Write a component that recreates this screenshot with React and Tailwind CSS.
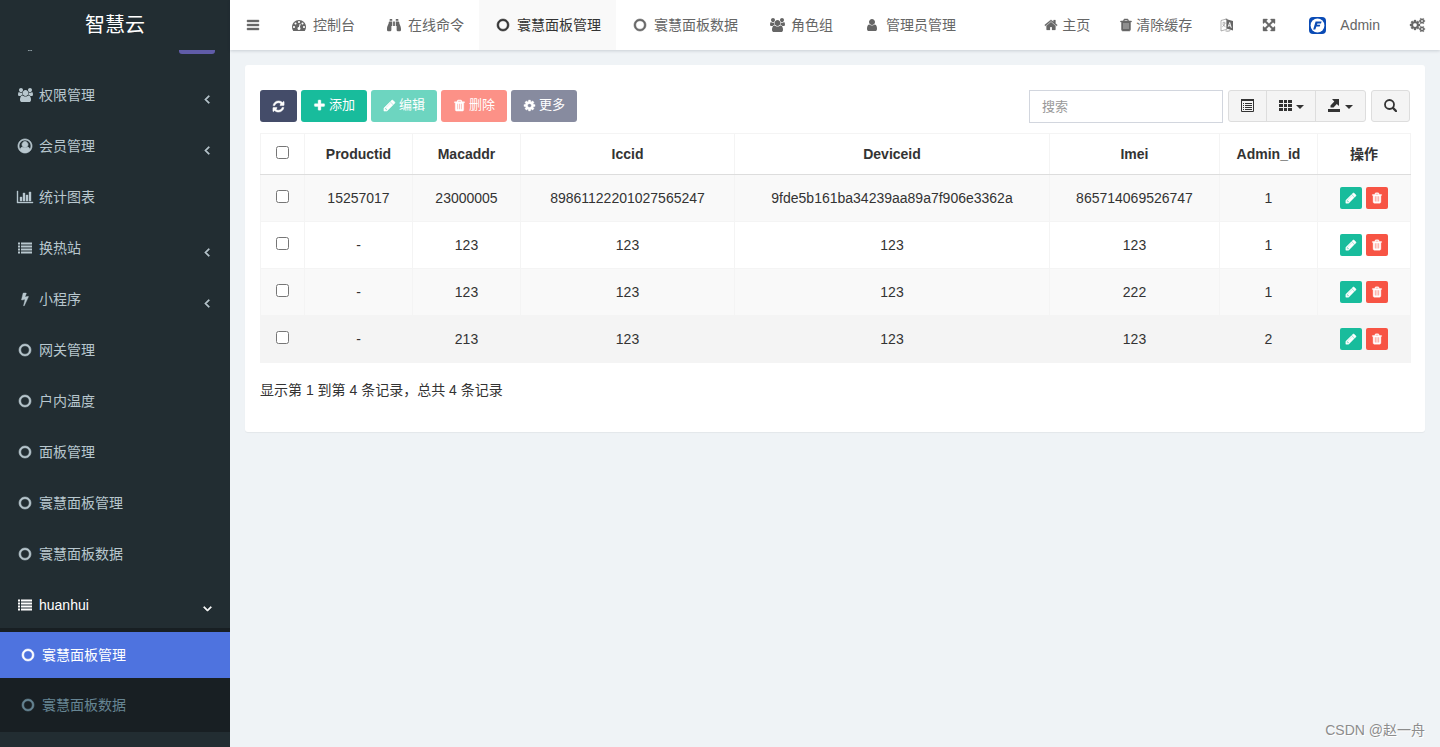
import { FaBinoculars } from "react-icons/fa";

const GLYPHS = {
  bars: { weight: 50, d: "M1664 1344v128q0 26-19 45t-45 19h-1408q-26 0-45-19t-19-45v-128q0-26 19-45t45-19h1408q26 0 45 19t19 45zm0-512v128q0 26-19 45t-45 19h-1408q-26 0-45-19t-19-45v-128q0-26 19-45t45-19h1408q26 0 45 19t19 45zm0-512v128q0 26-19 45t-45 19h-1408q-26 0-45-19t-19-45v-128q0-26 19-45t45-19h1408q26 0 45 19t19 45z" },
  circle: { weight: 70, d: "M896 352q-148 0-273 73t-198 198-73 273 73 273 198 198 273 73 273-73 198-198 73-273-73-273-198-198-273-73zm768 544q0 209-103 385.5t-279.5 279.5-385.5 103-385.5-103-279.5-279.5-103-385.5 103-385.5 279.5-279.5 385.5-103 385.5 103 279.5 279.5 103 385.5z" },
  user: { d: "M1536 1399q0 109-62.5 187t-150.5 78h-854q-88 0-150.5-78t-62.5-187q0-85 8.5-160.5t31.5-152 58.5-131 94-89 134.5-34.5q131 128 313 128t313-128q76 0 134.5 34.5t94 89 58.5 131 31.5 152 8.5 160.5zm-256-887q0 159-112.5 271.5t-271.5 112.5-271.5-112.5-112.5-271.5 112.5-271.5 271.5-112.5 271.5 112.5 112.5 271.5z" },
  users: { box: "-64 0 1920 1792", d: "M529 896q-162 5-265 128h-134q-82 0-138-40.5t-56-118.5q0-353 124-353 6 0 43.5 21t97.5 42.5 119 21.5q67 0 133-23-5 37-5 66 0 139 81 256zm1071 637q0 120-73 189.5t-194 69.5h-874q-121 0-194-69.5t-73-189.5q0-53 3.5-103.5t14-109 26.5-108.5 43-97.5 62-81 85.5-53.5 111.5-20q10 0 43 21.5t73 48 107 48 135 21.5 135-21.5 107-48 73-48 43-21.5q61 0 111.5 20t85.5 53.5 62 81 43 97.5 26.5 108.5 14 109 3.5 103.5zm-1024-1277q0 106-75 181t-181 75-181-75-75-181 75-181 181-75 181 75 75 181zm704 384q0 159-112.5 271.5t-271.5 112.5-271.5-112.5-112.5-271.5 112.5-271.5 271.5-112.5 271.5 112.5 112.5 271.5zm576 225q0 78-56 118.5t-138 40.5h-134q-103-123-265-128 81-117 81-256 0-29-5-66 66 23 133 23 59 0 119-21.5t97.5-42.5 43.5-21q124 0 124 353zm-128-609q0 106-75 181t-181 75-181-75-75-181 75-181 181-75 181 75 75 181z" },
  userCircle: { weight: 90, d: "M896 0q182 0 348 71t286 191 191 286 71 348q0 181-70.5 347t-190.5 286-286 191.5-349 71.5-349-71-285.5-191.5-190.5-286-71-347.5 71-348 191-286 286-191 348-71zm619 1351q149-205 149-455 0-156-61-298t-164-245-245-164-298-61-298 61-245 164-164 245-61 298q0 250 149 455 66-327 306-327 131 128 313 128t313-128q240 0 306 327zm-235-647q0-159-112.5-271.5t-271.5-112.5-271.5 112.5-112.5 271.5 112.5 271.5 271.5 112.5 271.5-112.5 112.5-271.5z" },
  chart: { box: "0 0 2048 1792", weight: 50, d: "M640 896v512h-256v-512h256zm384-512v1024h-256v-1024h256zm1024 1152v128h-2048v-1536h128v1408h1920zm-640-896v768h-256v-768h256zm384-384v1152h-256v-1152h256z" },
  list: { d: "M0 192h256v256H0zM384 192h1408v256H384zM0 576h256v256H0zM384 576h1408v256H384zM0 960h256v256H0zM384 960h1408v256H384zM0 1344h256v256H0zM384 1344h1408v256H384z" },
  bolt: { weight: 50, d: "M1333 566q18 20 7 44l-540 1157q-13 25-42 25-4 0-14-2-17-5-25.5-19t-4.5-30l197-808-406 101q-4 1-12 1-18 0-31-11-18-15-13-39l201-825q4-14 16-23t28-9h328q19 0 32 12.5t13 29.5q0 8-5 18l-171 463 396-98q8-2 12-2 19 0 34 15z" },
  gauge: { d: "M384 1152q0-53-37.5-90.5t-90.5-37.5-90.5 37.5-37.5 90.5 37.5 90.5 90.5 37.5 90.5-37.5 37.5-90.5zm192-448q0-53-37.5-90.5t-90.5-37.5-90.5 37.5-37.5 90.5 37.5 90.5 90.5 37.5 90.5-37.5 37.5-90.5zm428 481l101-382q6-26-7.5-48.5t-38.5-29.5-48 6.5-30 39.5l-101 382q-60 5-107 43.5t-63 98.5q-20 77 20 146t117 89 146-20 89-117q16-60-6-117t-72-91zm660-33q0-53-37.5-90.5t-90.5-37.5-90.5 37.5-37.5 90.5 37.5 90.5 90.5 37.5 90.5-37.5 37.5-90.5zm-640-640q0-53-37.5-90.5t-90.5-37.5-90.5 37.5-37.5 90.5 37.5 90.5 90.5 37.5 90.5-37.5 37.5-90.5zm448 192q0-53-37.5-90.5t-90.5-37.5-90.5 37.5-37.5 90.5 37.5 90.5 90.5 37.5 90.5-37.5 37.5-90.5zm320 448q0 261-141 483-19 29-54 29h-1402q-35 0-54-29-141-221-141-483 0-182 71-348t191-286 286-191 348-71 348 71 286 191 191 286 71 348z" },
  home: { weight: 30, d: "M1472 992v480q0 26-19 45t-45 19h-384v-384h-256v384h-384q-26 0-45-19t-19-45v-480q0-1 .5-3t.5-3l575-474 575 474q1 2 1 6zm223-69l-62 74q-8 9-21 11h-3q-13 0-21-7l-692-577-692 577q-12 8-24 7-13-2-21-11l-62-74q-8-10-7-23.5t11-21.5l719-599q32-26 76-26t76 26l244 204v-195q0-14 9-23t23-9h192q14 0 23 9t9 23v408l219 182q10 8 11 21.5t-7 23.5z" },
  trash: { weight: 60, d: "M704 1376v-704q0-14-9-23t-23-9h-64q-14 0-23 9t-9 23v704q0 14 9 23t23 9h64q14 0 23-9t9-23zm256 0v-704q0-14-9-23t-23-9h-64q-14 0-23 9t-9 23v704q0 14 9 23t23 9h64q14 0 23-9t9-23zm256 0v-704q0-14-9-23t-23-9h-64q-14 0-23 9t-9 23v704q0 14 9 23t23 9h64q14 0 23-9t9-23zm-544-992h448l-48-117q-7-9-17-11h-317q-10 2-17 11zm928 32v64q0 14-9 23t-23 9h-96v948q0 83-47 143.5t-113 60.5h-832q-66 0-113-58.5t-47-141.5v-952h-96q-14 0-23-9t-9-23v-64q0-14 9-23t23-9h309l70-167q15-37 54-63t79-26h320q40 0 79 26t54 63l70 167h309q14 0 23 9t9 23z" },
  plus: { weight: 50, d: "M1600 736v192q0 40-28 68t-68 28h-416v416q0 40-28 68t-68 28h-192q-40 0-68-28t-28-68v-416h-416q-40 0-68-28t-28-68v-192q0-40 28-68t68-28h416v-416q0-40 28-68t68-28h192q40 0 68 28t28 68v416h416q40 0 68 28t28 68z" },
  pencil: { weight: 70, d: "M491 1536l91-91-235-235-91 91v107h128v128h107zm523-928q0-22-22-22-10 0-17 7l-542 542q-7 7-7 17 0 22 22 22 10 0 17-7l542-542q7-7 7-17zm-54-192l416 416-832 832h-416v-416zm683 96q0 53-37 90l-166 166-416-416 166-165q36-38 90-38 53 0 91 38l235 234q37 39 37 91z" },
  cog: { weight: 40, d: "M1152 896q0-106-75-181t-181-75-181 75-75 181 75 181 181 75 181-75 75-181zm512-109v222q0 12-8 23t-20 13l-185 28q-19 54-39 91 35 50 107 138 10 12 10 25t-9 23q-27 37-99 108t-94 71q-12 0-26-9l-138-108q-44 23-91 38-16 136-29 186-7 28-36 28h-222q-14 0-24.5-8.5t-11.5-21.5l-28-184q-49-16-90-37l-141 107q-10 9-25 9-14 0-25-11-126-114-165-168-7-10-7-23 0-12 8-23 15-21 51-66.5t54-70.5q-27-50-41-99l-183-27q-13-2-21-12.5t-8-23.5v-222q0-12 8-23t19-13l186-28q14-46 39-92-40-57-107-138-10-12-10-24 0-10 9-23 26-36 98.5-107.5t94.5-71.5q13 0 26 10l138 107q44-23 91-38 16-136 29-186 7-28 36-28h222q14 0 24.5 8.5t11.5 21.5l28 184q49 16 90 37l142-107q9-9 24-9 13 0 25 10 129 119 165 170 7 8 7 22 0 12-8 23-15 21-51 66.5t-54 70.5q26 50 41 98l183 28q13 2 21 12.5t8 23.5z" },
  refresh: { weight: 70, d: "M1639 1056q0 5-1 7-64 268-268 434.5t-478 166.5q-146 0-282.5-55t-243.5-157l-129 129q-19 19-45 19t-45-19-19-45v-448q0-26 19-45t45-19h448q26 0 45 19t19 45-19 45l-137 137q71 66 161 102t187 36q134 0 250-65t186-179q11-17 53-117 8-23 30-23h192q13 0 22.5 9.5t9.5 22.5zm25-800v448q0 26-19 45t-45 19h-448q-26 0-45-19t-19-45 19-45l138-138q-148-137-349-137-134 0-250 65t-186 179q-11 17-53 117-8 23-30 23h-199q-13 0-22.5-9.5t-9.5-22.5v-7q65-268 270-434.5t480-166.5q146 0 284 55.5t245 156.5l130-129q19-19 45-19t45 19 19 45z" },
  expand: { weight: 50, d: "M1411 541l-355 355 355 355 144-144q29-31 70-14 39 17 39 59v448q0 26-19 45t-45 19h-448q-42 0-59-40-17-39 14-69l144-144-355-355-355 355 144 144q31 30 14 69-17 40-59 40h-448q-26 0-45-19t-19-45v-448q0-42 40-59 39-17 69 14l144 144 355-355-355-355-144 144q-19 19-45 19-12 0-24-5-40-17-40-59v-448q0-26 19-45t45-19h448q42 0 59 40 17 39-14 69l-144 144 355 355 355-355-144-144q-31-30-14-69 17-40 59-40h448q26 0 45 19t19 45v448q0 42-39 59-13 5-25 5-26 0-45-19z" },
  cogs: { box: "0 0 1920 1792", weight: 40, d: "M896 896q0-106-75-181t-181-75-181 75-75 181 75 181 181 75 181-75 75-181zm768 512q0-52-38-90t-90-38-90 38-38 90q0 53 37.5 90.5t90.5 37.5 90.5-37.5 37.5-90.5zm0-1024q0-52-38-90t-90-38-90 38-38 90q0 53 37.5 90.5t90.5 37.5 90.5-37.5 37.5-90.5zm-384 421v185q0 10-7 19.5t-16 10.5l-155 24q-11 35-32 76 34 48 90 115 7 11 7 20 0 12-7 19-23 30-82.5 89.5t-78.5 59.5q-11 0-21-7l-115-90q-37 19-77 31-11 108-23 155-7 24-30 24h-186q-11 0-20-7.5t-10-17.5l-23-153q-34-10-75-31l-118 89q-7 7-20 7-11 0-21-8-144-133-144-160 0-9 7-19 10-14 41-53t47-61q-23-44-35-82l-152-24q-10-1-17-9.5t-7-19.5v-185q0-10 7-19.5t16-10.5l155-24q11-35 32-76-34-48-90-115-7-11-7-20 0-12 7-20 22-30 82-89t79-59q11 0 21 7l115 90q34-18 77-32 11-108 23-154 7-24 30-24h186q11 0 20 7.5t10 17.5l23 153q34 10 75 31l118-89q8-7 20-7 11 0 21 8 144 133 144 160 0 8-7 19-12 16-42 54t-45 60q23 48 34 82l152 23q10 2 17 10.5t7 19.5zm640 533v140q0 16-149 31-12 27-30 52 51 113 51 138 0 4-4 7-122 71-124 71-8 0-46-47t-52-68q-20 2-30 2t-30-2q-14 21-52 68t-46 47q-2 0-124-71-4-3-4-7 0-25 51-138-18-25-30-52-149-15-149-31v-140q0-16 149-31 13-29 30-52-51-113-51-138 0-4 4-7 4-2 35-20t59-34 30-16q8 0 46 46.5t52 67.5q20-2 30-2t30 2q51-71 92-112l6-2q4 0 124 70 4 3 4 7 0 25-51 138 17 23 30 52 149 15 149 31zm0-1024v140q0 16-149 31-12 27-30 52 51 113 51 138 0 4-4 7-122 71-124 71-8 0-46-47t-52-68q-20 2-30 2t-30-2q-14 21-52 68t-46 47q-2 0-124-71-4-3-4-7 0-25 51-138-18-25-30-52-149-15-149-31v-140q0-16 149-31 13-29 30-52-51-113-51-138 0-4 4-7 4-2 35-20t59-34 30-16q8 0 46 46.5t52 67.5q20-2 30-2t30 2q51-71 92-112l6-2q4 0 124 70 4 3 4 7 0 25-51 138 17 23 30 52 149 15 149 31z" },
  angle: { weight: 100, d: "M1203 544q0 13-10 23l-393 393 393 393q10 10 10 23t-10 23l-50 50q-10 10-23 10t-23-10l-466-466q-10-10-10-23t10-23l466-466q10-10 23-10t23 10l50 50q10 10 10 23z" },
};

function Icon({ name, size = "h-3.5", className = "" }) {
  if (name === "binoculars") return <FaBinoculars aria-hidden="true" className={`${size} w-auto shrink-0 ${className}`} />;
  const g = GLYPHS[name];
  return (
    <svg aria-hidden="true" viewBox={g.box || "0 0 1792 1792"} fill="currentColor" stroke="currentColor" strokeWidth={g.weight || 0} className={`${size} w-auto shrink-0 overflow-visible ${className}`}>
      <path d={g.d} />
    </svg>
  );
}

function FixedIcon({ name }) {
  return (
    <span className="flex w-[18px] shrink-0 justify-center">
      <Icon name={name} />
    </span>
  );
}

const MENU = [
  { icon: "users", label: "权限管理", arrow: true },
  { icon: "userCircle", label: "会员管理", arrow: true },
  { icon: "chart", label: "统计图表" },
  { icon: "list", label: "换热站", arrow: true },
  { icon: "bolt", label: "小程序", arrow: true },
  { icon: "circle", label: "网关管理" },
  { icon: "circle", label: "户内温度" },
  { icon: "circle", label: "面板管理" },
  { icon: "circle", label: "寰慧面板管理" },
  { icon: "circle", label: "寰慧面板数据" },
];

function Sidebar() {
  return (
    <aside className="flex w-[230px] shrink-0 flex-col overflow-hidden bg-[#222d32] text-[#b8c7ce]">
      <a href="#" className="flex h-[50px] shrink-0 items-center justify-center text-xl text-white">智慧云</a>
      <nav className="min-h-0 flex-1 overflow-hidden">
        <ul className="-mt-[29px] flex flex-col gap-[5px]">
          <li>
            <a href="#" aria-label="常规管理" className="flex h-[46px] items-center justify-between pl-4 pr-[15px]">
              <FixedIcon name="cogs" />
              <span className="h-5 w-9 rounded-[3px] bg-[#605ca8]" />
            </a>
          </li>
          {MENU.map((m) => (
            <li key={m.label}>
              <a href="#" className="flex h-[46px] items-center gap-[5px] pl-4 pr-4">
                <FixedIcon name={m.icon} />
                <span className="flex-1">{m.label}</span>
                {m.arrow && <Icon name="angle" className="mt-2" />}
              </a>
            </li>
          ))}
          <li>
            <a href="#" className="flex h-[46px] items-center gap-[5px] pl-4 pr-4 text-white">
              <FixedIcon name="list" />
              <span className="flex-1">huanhui</span>
              <Icon name="angle" className="mt-2 -rotate-90" />
            </a>
            <ul className="flex flex-col gap-1 bg-[#181f23] py-1">
              <li>
                <a href="#" className="flex h-[46px] items-center gap-[5px] bg-[#4e73df] pl-[19px] text-white">
                  <FixedIcon name="circle" />寰慧面板管理
                </a>
              </li>
              <li>
                <a href="#" className="flex h-[46px] items-center gap-[5px] pl-[19px] text-[#668593]">
                  <FixedIcon name="circle" />寰慧面板数据
                </a>
              </li>
            </ul>
          </li>
        </ul>
      </nav>
    </aside>
  );
}

const TABS = [
  { icon: "gauge", label: "控制台" },
  { icon: "binoculars", label: "在线命令" },
  { icon: "circle", label: "寰慧面板管理", active: true },
  { icon: "circle", label: "寰慧面板数据" },
  { icon: "users", label: "角色组" },
  { icon: "user", label: "管理员管理" },
];

function LanguageIcon() {
  return (
    <svg aria-hidden="true" viewBox="0 0 14 14" className="h-3.5 w-3.5">
      <path d="M1 2.5 7 .8v10.4L1 13z" fill="#fff" stroke="currentColor" strokeWidth=".5" />
      <path d="M2.3 5h3.3M4 3.7V5M5 5.2Q4.300 7.500 2.300 8.800M2.800 6Q3.800 8 5.500 8.800" fill="none" stroke="currentColor" strokeWidth=".5" />
      <path d="M5 .8 13 3v9.500L6.500 10.500V2z" fill="currentColor" />
      <path d="m8.200 8.800 1.500-4.300 1.600 5.300M8.700 7.500l2.100.6" fill="none" stroke="#fff" strokeWidth=".9" />
      <path d="M5.500 12.900q2.500.8 4.800-.3" fill="none" stroke="currentColor" strokeWidth=".6" />
    </svg>
  );
}

function Logo() {
  return (
    <svg aria-hidden="true" viewBox="0 0 17 17" className="h-[17px] w-[17px]">
      <rect width="17" height="17" rx="4" fill="#0a4bb5" />
      <circle cx="8.500" cy="8.500" r="6.900" fill="#fff" />
      <path d="M6.600 4.600h6l-.6 1.900H8.400L8 7.700h3.300l-.6 1.800H7.400L6.300 12.400H4.200z" fill="#0a4bb5" />
    </svg>
  );
}

function TopBar() {
  return (
    <header className="z-10 flex h-[50px] shrink-0 justify-between bg-white text-[#666] shadow-[0_1px_3px_rgba(0,21,41,0.16)]">
      <div className="flex">
        <button type="button" aria-label="菜单" className="flex w-[45px] items-center justify-center"><Icon name="bars" /></button>
        <nav className="flex">
          {TABS.map((t) => (
            <a key={t.label} href="#" className={`flex items-center gap-[5px] px-[15px] ${t.active ? "bg-[#f9f9f9] text-[#333]" : ""}`}>
              <FixedIcon name={t.icon} />{t.label}
            </a>
          ))}
        </nav>
      </div>
      <div className="flex">
        <a href="#" className="flex items-center gap-1 px-[15px]"><Icon name="home" />主页</a>
        <a href="#" className="flex items-center gap-[3px] px-[14px]"><Icon name="trash" />清除缓存</a>
        <button type="button" aria-label="语言" className="px-[14px]"><LanguageIcon /></button>
        <button type="button" aria-label="全屏" className="px-[14px]"><Icon name="expand" /></button>
        <a href="#" className="flex items-center gap-[14px] pl-[19px] pr-[15px]"><Logo />Admin</a>
        <button type="button" aria-label="设置" className="px-[15px]"><Icon name="cogs" /></button>
      </div>
    </header>
  );
}

const COLUMNS = ["Productid", "Macaddr", "Iccid", "Deviceid", "Imei", "Admin_id"];
const ROWS = [
  ["15257017", "23000005", "89861122201027565247", "9fde5b161ba34239aa89a7f906e3362a", "865714069526747", "1"],
  ["-", "123", "123", "123", "123", "1"],
  ["-", "123", "123", "123", "222", "1"],
  ["-", "213", "123", "123", "123", "2"],
];
const ROW_COLORS = ["bg-[#f9f9f9]", "bg-white", "bg-[#f9f9f9]", "bg-[#f4f4f4]"];

const ACTIONS = [
  { icon: "plus", label: "添加", color: "bg-[#18bc9c]" },
  { icon: "pencil", label: "编辑", color: "bg-[#6dd5c0]" },
  { icon: "trash", label: "删除", color: "bg-[#fc9187]" },
  { icon: "cog", label: "更多", color: "bg-[#878b9f]" },
];

function Caret() {
  return <svg aria-hidden="true" viewBox="0 0 8 4" className="mt-1 h-1 w-2" fill="currentColor"><path d="M0 0h8L4 4z" /></svg>;
}

function Toolbar() {
  return (
    <div className="flex items-start justify-between">
      <div className="flex gap-1 text-[13px] text-white">
        <button type="button" aria-label="刷新" className="flex h-8 items-center rounded-[3px] bg-[#444c69] px-3"><Icon name="refresh" size="h-[13px]" /></button>
        {ACTIONS.map((a) => (
          <button key={a.label} type="button" className={`flex h-8 items-center gap-[3px] rounded-[3px] px-3 pb-0.5 ${a.color}`}>
            <Icon name={a.icon} size="h-[13px]" />{a.label}
          </button>
        ))}
      </div>
      <div className="flex gap-[5px] text-[#333]">
        <input type="text" aria-label="搜索" placeholder="搜索" className="h-[33px] w-[194px] border border-[#d2d6de] px-3 text-[13px] placeholder:text-[#999]" />
        <div className="flex h-8 divide-x divide-[#ddd] rounded-[3px] border border-[#ddd] bg-[#f4f4f4]">
          <button type="button" aria-label="切换视图" className="flex w-[38px] items-center justify-center pb-0.5">
            <svg aria-hidden="true" viewBox="0 0 13 13" className="h-[13px] w-[13px]" fill="none" stroke="currentColor">
              <path d="M.5 1h12v11.500H.5z" /><path d="M0 1h13" strokeWidth="2" /><path d="M2 4.500h1m1 0h7m-9 2h1m1 0h7m-9 2h1m1 0h7m-9 2h1m1 0h7" />
            </svg>
          </button>
          <button type="button" aria-label="列" className="flex w-[49px] items-center justify-center gap-1 pb-0.5">
            <svg aria-hidden="true" viewBox="0 0 13 13" className="h-[13px] w-[13px]" fill="currentColor">
              <path d="M0 1h4v3H0zM5 1h3v3H5zM9 1h4v3H9zM0 5h4v3H0zM5 5h3v3H5zM9 5h4v3H9zM0 9h4v3H0zM5 9h3v3H5zM9 9h4v3H9z" />
            </svg>
            <Caret />
          </button>
          <button type="button" aria-label="导出数据" className="flex w-[49px] items-center justify-center gap-[5px] pb-0.5">
            <svg aria-hidden="true" viewBox="0 0 12 13" className="h-[13px] w-3" fill="currentColor">
              <path d="M0 10h12v3H0zM4 0h7v7L8.800 5 5.500 8.500H2.500V6.500L6.300 2.600z" />
            </svg>
            <Caret />
          </button>
        </div>
        <button type="button" aria-label="搜索" className="flex h-8 w-[39px] items-center justify-center rounded-[3px] border border-[#ddd] bg-[#f4f4f4] pb-0.5">
          <svg aria-hidden="true" viewBox="0 0 13 13" className="h-[13px] w-[13px]" fill="none" stroke="currentColor">
            <circle cx="5.500" cy="5.500" r="4.500" strokeWidth="1.800" /><path d="m9 9 3 3" strokeWidth="2.400" strokeLinecap="round" />
          </svg>
        </button>
      </div>
    </div>
  );
}

function DataTable() {
  return (
    <table className="mt-[10px] w-full table-fixed border-collapse text-center text-[#333]">
      <colgroup>
        <col className="w-[44px]" /><col className="w-[108px]" /><col className="w-[108px]" /><col className="w-[214px]" />
        <col className="w-[315px]" /><col className="w-[170px]" /><col className="w-[98px]" /><col className="w-[93px]" />
      </colgroup>
      <thead>
        <tr className="h-[41px]">
          <th className="border border-[#f4f4f4] border-b-[#ddd] pb-1.5"><input type="checkbox" aria-label="全选" className="align-middle" /></th>
          {COLUMNS.map((c) => <th key={c} className="border border-[#f4f4f4] border-b-[#ddd] font-bold">{c}</th>)}
          <th className="border border-[#f4f4f4] border-b-[#ddd] font-bold">操作</th>
        </tr>
      </thead>
      <tbody>
        {ROWS.map((r, i) => (
          <tr key={i} className={`h-[47px] ${ROW_COLORS[i]}`}>
            <td className="border border-[#f4f4f4] pb-1.5"><input type="checkbox" aria-label={`选择第 ${i + 1} 行`} className="align-middle" /></td>
            {r.map((v, j) => <td key={j} className="border border-[#f4f4f4]">{v}</td>)}
            <td className="border border-[#f4f4f4]">
              <div className="flex justify-center gap-1 text-white">
                <button type="button" aria-label="编辑" className="flex h-[22px] w-[22px] items-center justify-center rounded-xs bg-[#18bc9c]"><Icon name="pencil" size="h-3" /></button>
                <button type="button" aria-label="删除" className="flex h-[22px] w-[22px] items-center justify-center rounded-xs bg-[#f75444]"><Icon name="trash" size="h-3" /></button>
              </div>
            </td>
          </tr>
        ))}
      </tbody>
    </table>
  );
}

export default function App() {
  return (
    <div className="relative flex h-screen overflow-hidden bg-[#eff3f6] font-['Liberation_Sans','Noto_Sans_CJK_SC',sans-serif] text-sm">
      <Sidebar />
      <div className="flex min-w-0 flex-1 flex-col">
        <TopBar />
        <main className="p-[15px]">
          <section className="rounded-[3px] bg-white px-[15px] pb-8 pt-[25px] shadow-[0_1px_1px_rgba(0,0,0,0.05)]">
            <Toolbar />
            <DataTable />
            <p className="mt-[17px] text-[#333]">显示第 1 到第 4 条记录，总共 4 条记录</p>
          </section>
        </main>
      </div>
      <span className="absolute bottom-[7px] right-[15px] text-[#8c8c8c] [text-shadow:1px_1px_0_#fff]">CSDN @赵一舟</span>
    </div>
  );
}
